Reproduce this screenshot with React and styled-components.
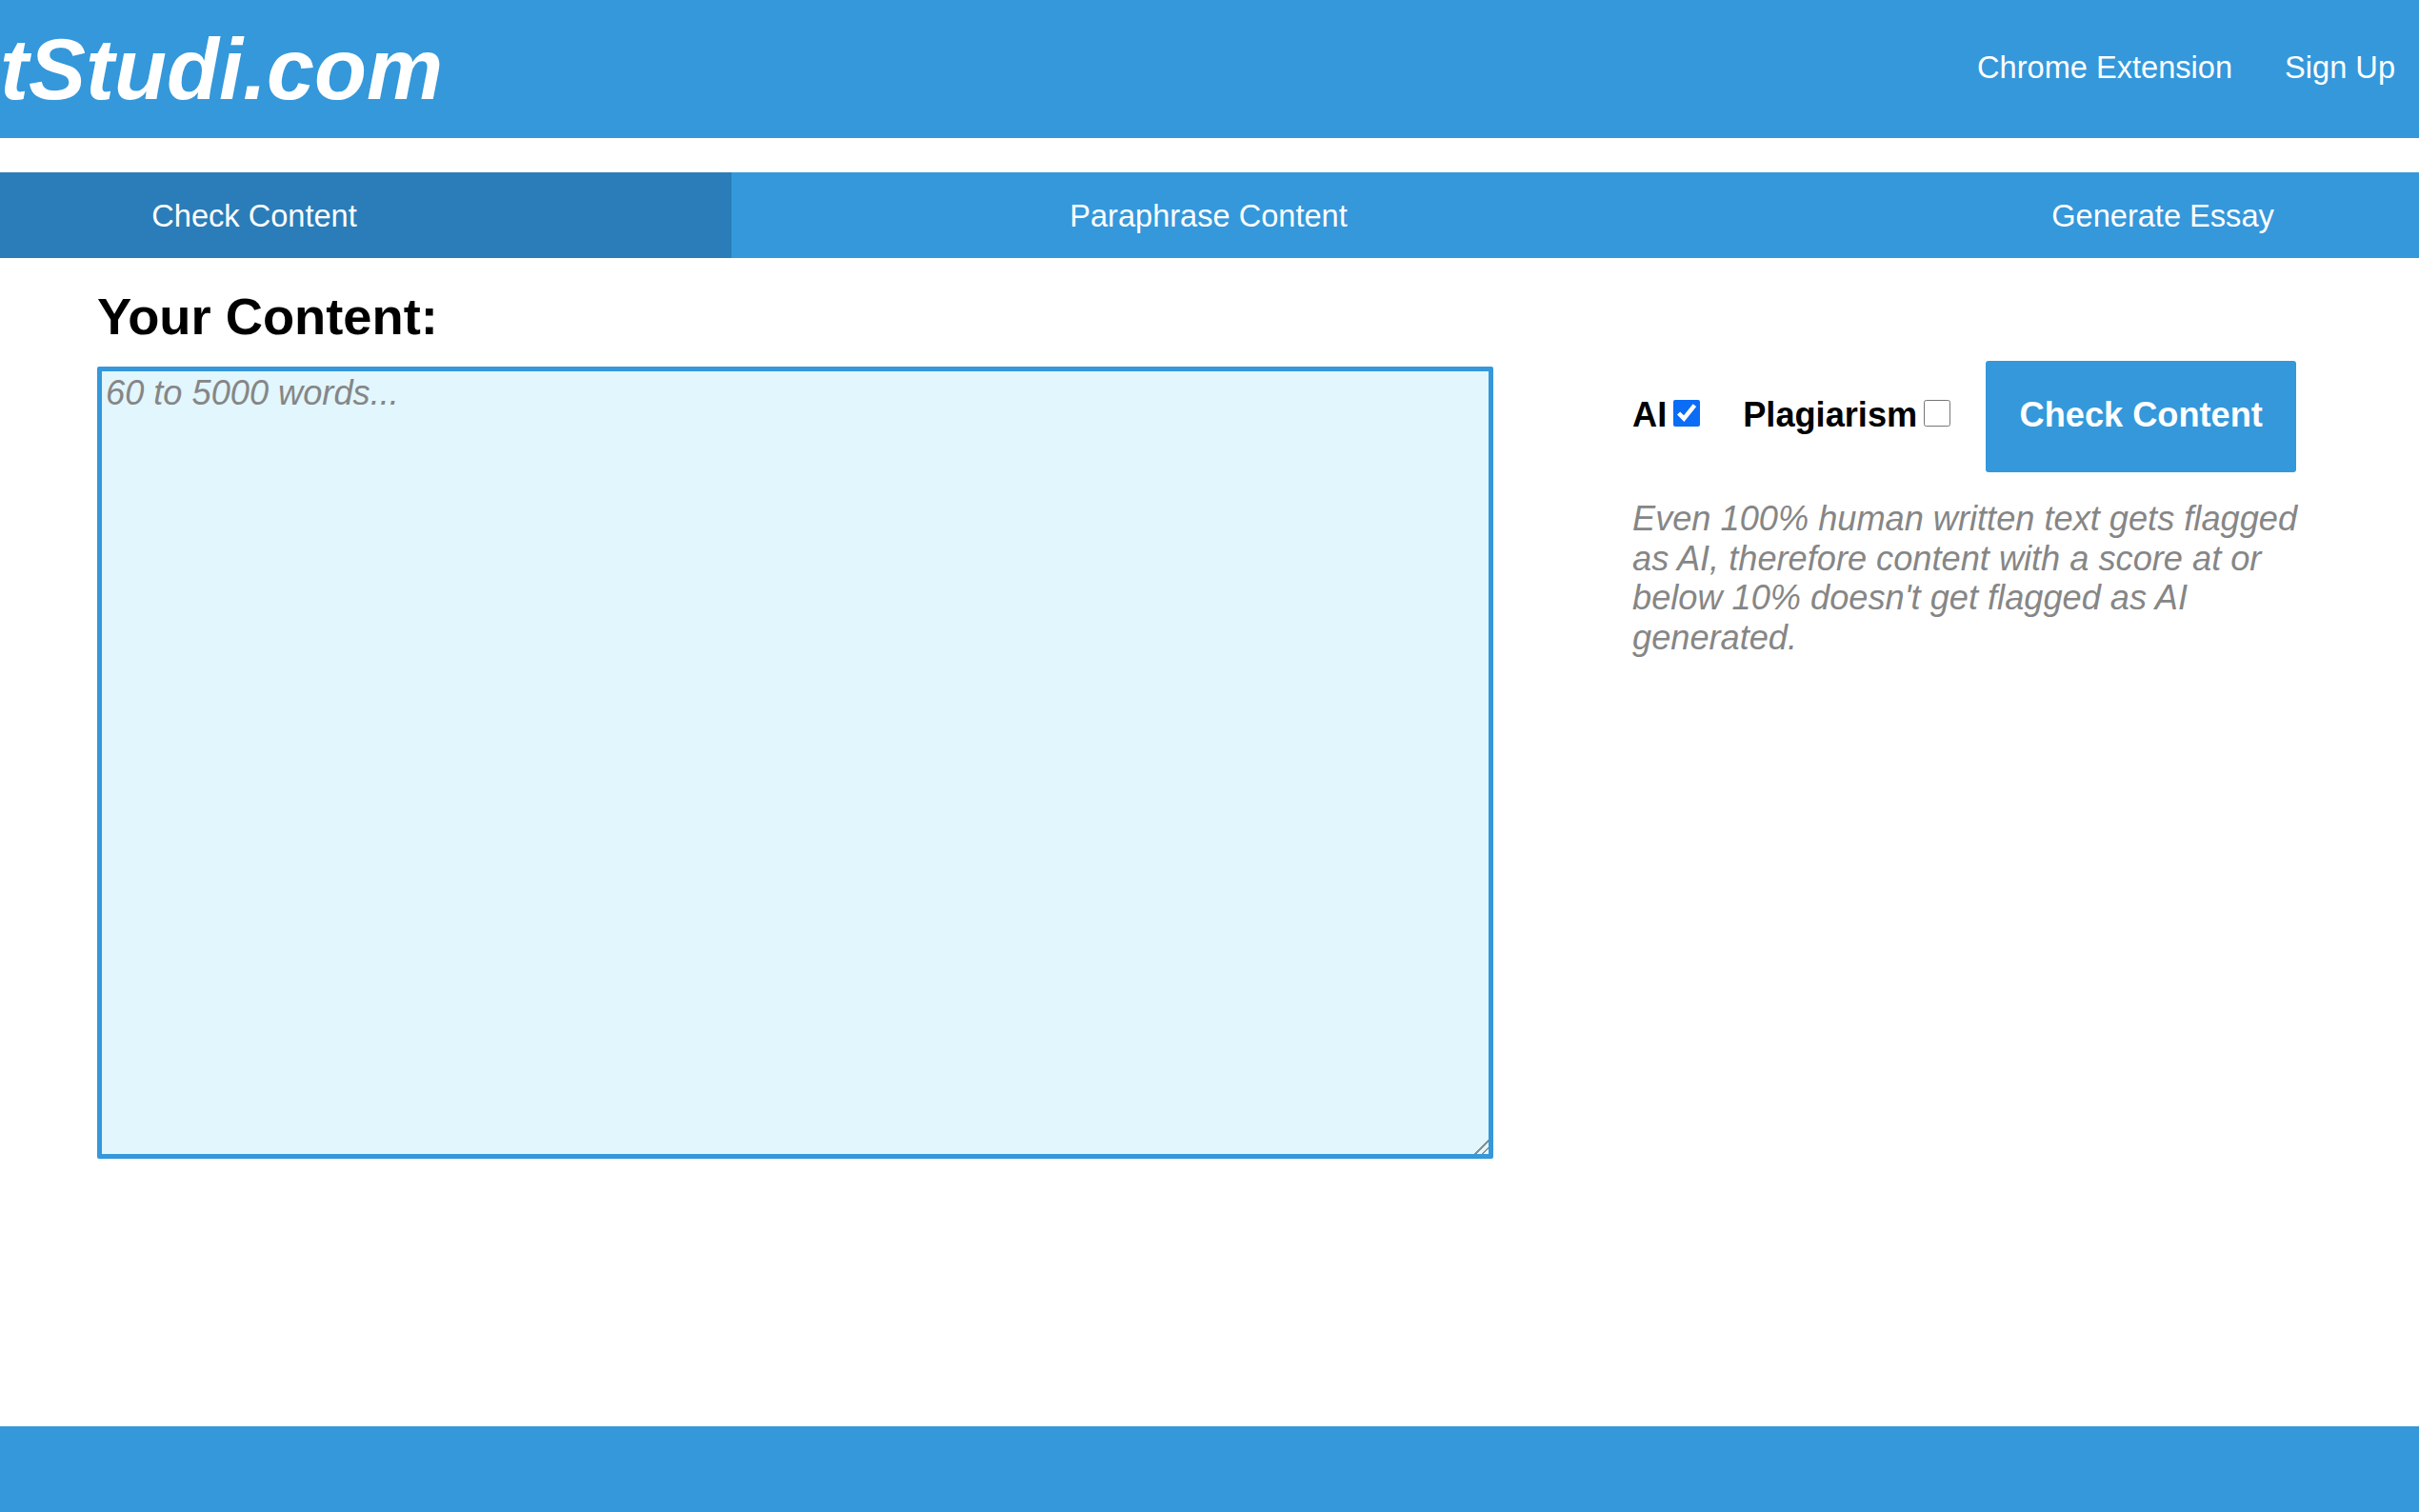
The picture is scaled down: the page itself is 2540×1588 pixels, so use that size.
import React from "react";
import styled, { createGlobalStyle } from "styled-components";

const Global = createGlobalStyle`
  html, body { margin: 0; padding: 0; height: 100%; overflow: hidden; background: #fff; }
  body { font-family: "Liberation Sans", Arial, sans-serif; color: #000; }
`;
const Page = styled.div`
  width: 2540px; height: 1588px; display: flex; flex-direction: column; overflow: hidden;
`;
const Header = styled.header`
  height: 145px; flex: none; background: #3498db; display: flex; align-items: center; justify-content: space-between;
  padding: 0 25px 0 0; margin-bottom: 36px;
`;
const Logo = styled.div`
  font-size: 90px; font-weight: 700; font-style: italic; color: #fff; line-height: 1;
`;
const TopLinks = styled.nav`
  display: flex; gap: 55px; font-size: 32.6px; color: #fff; padding-bottom: 3px;
`;
const Tabs = styled.nav`
  flex: none; height: 90px; background: #3498db; display: grid; grid-template-columns: repeat(3, 1002px); margin-left: -234px; width: 2774px;
`;
const Tab = styled.div`
  display: flex; align-items: center; justify-content: center; font-size: 32.6px; color: #fff; padding-top: 1px;
  background: ${p => (p.$active ? "#2a7db8" : "transparent")};
`;
const Main = styled.main`
  flex: 1; display: flex; padding: 0 0 0 102px; gap: 146px; align-items: flex-start;
`;
const Left = styled.section`
  width: 1466px; flex: none;
`;
const Title = styled.h2`
  font-size: 54.3px; font-weight: 700; line-height: 62px; margin: 31px 0 21px;
`;
const Area = styled.textarea`
  display: block; width: 1466px; height: 832px; box-sizing: border-box; border: 5px solid #3498db; background: #e2f6fd;
  font-family: "Liberation Sans", Arial, sans-serif; font-size: 36.2px; padding: 2px 4px; margin: 0; outline: none; resize: both; border-radius: 2px;
  &::placeholder { color: #868686; font-style: italic; opacity: 1; }
  &::-webkit-resizer {
    background: linear-gradient(135deg, transparent 50%, #8a8f92 50%, #8a8f92 58%, transparent 58%, transparent 74%, #8a8f92 74%, #8a8f92 82%, transparent 82%);
  }
`;
const Right = styled.aside`
  width: 700px; flex: none; padding-top: 108px;
`;
const Controls = styled.div`
  display: flex; align-items: center; height: 117px;
`;
const CheckLabel = styled.label`
  display: flex; align-items: center; font-size: 36.2px; font-weight: 700; gap: 7px; margin-right: ${p => p.$gap}px; padding-bottom: 4px;
`;
const Box = styled.input`
  width: 28px; height: 28px; margin: 0 0 3px; accent-color: #0b6cf5;
`;
const Submit = styled.button`
  width: 326px; height: 117px; border: 0; border-radius: 3px; background: #3498db; color: #fff; font-family: inherit;
  font-size: 36.2px; font-weight: 700; padding: 0 0 3px;
`;
const Note = styled.p`
  margin: 28px 0 0; width: 705px; font-size: 36.2px; line-height: 41.7px; font-style: italic; color: #868686;
`;
const Footer = styled.footer`
  flex: none; height: 90px; background: #3498db;
`;

export default function App() {
  return (
    <Page>
      <Global />
      <Header>
        <Logo>tStudi.com</Logo>
        <TopLinks>
          <span>Chrome Extension</span>
          <span>Sign Up</span>
        </TopLinks>
      </Header>
      <Tabs>
        <Tab $active>Check Content</Tab>
        <Tab>Paraphrase Content</Tab>
        <Tab>Generate Essay</Tab>
      </Tabs>
      <Main>
        <Left>
          <Title>Your Content:</Title>
          <Area placeholder="60 to 5000 words..." />
        </Left>
        <Right>
          <Controls>
            <CheckLabel $gap={45}>AI<Box type="checkbox" defaultChecked /></CheckLabel>
            <CheckLabel $gap={37}>Plagiarism<Box type="checkbox" /></CheckLabel>
            <Submit>Check Content</Submit>
          </Controls>
          <Note>Even 100% human written text gets flagged as AI, therefore content with a score at or below 10% doesn't get flagged as AI generated.</Note>
        </Right>
      </Main>
      <Footer />
    </Page>
  );
}
